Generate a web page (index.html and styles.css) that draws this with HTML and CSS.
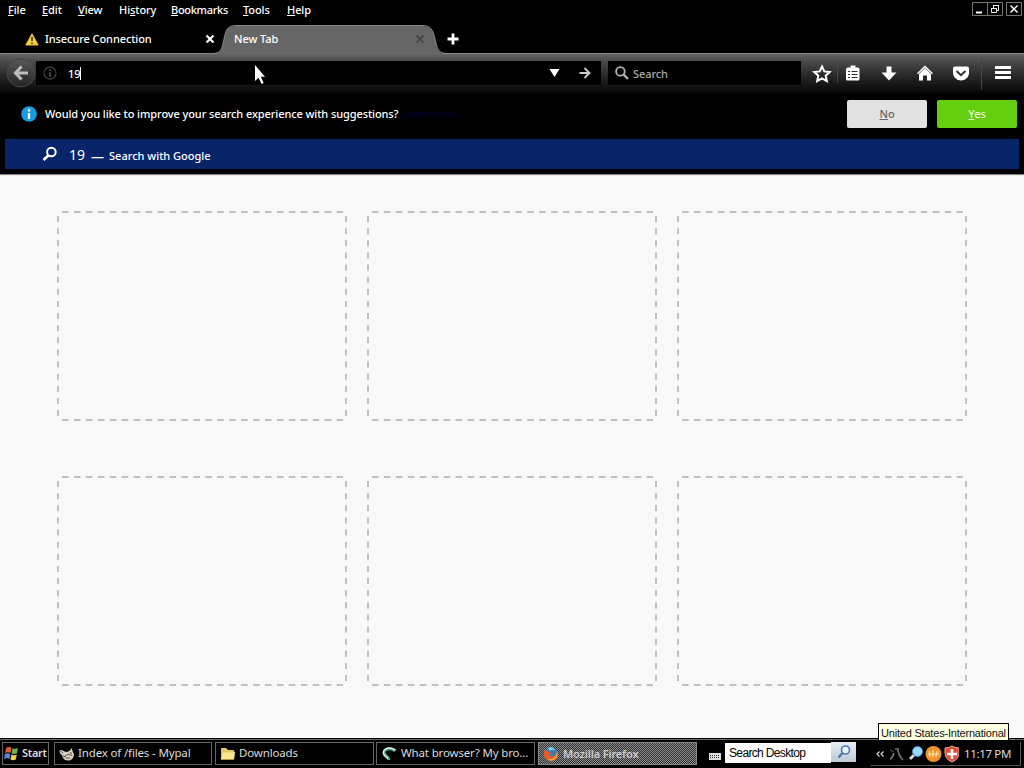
FILE: index.html
```html
<!DOCTYPE html>
<html lang="en">
<head>
<meta charset="utf-8">
<title>New Tab</title>
<link rel="stylesheet" href="styles.css">
</head>
<body>
<svg class="defs" width="0" height="0">
  <defs>
    <symbol id="slot" viewBox="0 0 290 210">
      <g fill="none" stroke="#c0c0c0" stroke-width="2">
        <path d="M5 1H286M5 209H286" stroke-dasharray="6.6 5.340"/>
        <path d="M1 5V206M289 5V206" stroke-dasharray="6 6.130"/>
      </g>
    </symbol>
  </defs>
</svg>
<div class="screen">
  <header class="menubar">
    <nav class="menus">
      <span class="m-file"><u>F</u>ile</span><span class="m-edit"><u>E</u>dit</span><span class="m-view"><u>V</u>iew</span><span class="m-history">Hi<u>s</u>tory</span><span class="m-bookmarks"><u>B</u>ookmarks</span><span class="m-tools"><u>T</u>ools</span><span class="m-help"><u>H</u>elp</span>
    </nav>
    <svg class="window-buttons" width="52" height="16" viewBox="0 0 52 16" fill="none" stroke="#77776c">
      <path d="M.5 2.500h15v13H.5zM15.500 2.500h15v13h-15zM34.500 2.500h15v13h-15z"/>
      <path d="M4 12.500h6" stroke="#fff" stroke-width="2"/>
      <path d="M19.500 8.500h5v4h-5zM21.500 8V5.500h5v5H25M19 8.500h6M21 5.500h6" stroke="#eee"/>
      <path d="M38.500 5.500l7 7M45.500 5.500l-7 7" stroke="#fff" stroke-width="1.500"/>
    </svg>
  </header>

  <div class="tabs">
    <div class="tab">
      <svg width="14" height="13" viewBox="0 0 14 13"><path d="M7 .8L13.200 12H.8z" fill="#f6cf43" stroke="#e3b62b" stroke-linejoin="round"/><path d="M7 4v4M7 9.500V11" stroke="#4a3c12" stroke-width="1.700"/></svg>
      <span class="tab-title">Insecure Connection</span>
      <svg class="tab-close" width="10" height="10" viewBox="0 0 10 10"><path d="M1.500 1.500l7 7M8.500 1.500l-7 7" stroke="#fff" stroke-width="2.200"/></svg>
    </div>
    <div class="tab active">
      <svg class="tab-shape" width="234" height="30" viewBox="0 0 234 30"><path d="M0 29C9 29 9 22 11 14C13 5 14 1 23 1H209C218 1 220 5 222 14C224 23 225 29 234 29V30H0z" fill="#666"/><path d="M0 28.500C9 28.500 9 22 11 14C13 5 14 .5 23 .5H209C218 .5 220 5 222 14C224 23 225 28.500 234 28.500" fill="none" stroke="#888"/></svg>
      <span class="tab-title">New Tab</span>
      <svg class="tab-close" width="10" height="10" viewBox="0 0 10 10"><path d="M1.500 1.500l7 7M8.500 1.500l-7 7" stroke="#484848" stroke-width="1.800"/></svg>
    </div>
    <svg class="new-tab" width="12" height="12" viewBox="0 0 12 12"><path d="M6 .5v11M.5 6h11" stroke="#fff" stroke-width="2.800"/></svg>
  </div>

  <div class="toolbar">
    <svg class="back" width="30" height="30" viewBox="0 0 30 30">
      <defs><linearGradient id="bg" x2="0" y2="1"><stop stop-color="#585858"/><stop offset="1" stop-color="#242424"/></linearGradient></defs>
      <circle cx="15" cy="15" r="14" fill="url(#bg)" stroke="#484848"/>
      <path d="M15.500 8.500L9.500 15l6 6.500M9.500 15H22" fill="none" stroke="#bdbdbd" stroke-width="3"/>
    </svg>
    <div class="url">
      <svg class="identity" width="14" height="14" viewBox="0 0 14 14"><circle cx="7" cy="7" r="6" fill="none" stroke="#3b3b3b" stroke-width="1.300"/><path d="M7 6v5M7 3v2" stroke="#444" stroke-width="1.800"/></svg>
      <span class="url-text">19</span><i class="caret"></i>
      <svg class="drop" width="11" height="8" viewBox="0 0 11 8"><path d="M.5 0h10L5.500 8z" fill="#fff"/></svg>
      <svg class="go" width="12" height="12" viewBox="0 0 12 12"><path d="M.5 6H10M5.500 1l5 5-5 5" fill="none" stroke="#ccc" stroke-width="1.800"/></svg>
    </div>
    <div class="searchbox">
      <svg width="14" height="14" viewBox="0 0 14 14" fill="none" stroke="#b5b5b5"><circle cx="5.400" cy="5.400" r="4.300" stroke-width="1.800"/><path d="M8.500 8.500l4.500 4.500" stroke-width="2.300"/></svg>
      <span>Search</span>
    </div>
    <svg class="tool-icons" width="217" height="40" viewBox="0 0 217 40">
      <path d="M36.500 11v18" stroke="#484848"/>
      <path d="M180.500 3v33" stroke="#454545"/>
      <path d="M21 12.500l2.300 4.900 5.400.6-4 3.700 1.100 5.300-4.800-2.700-4.800 2.700 1.100-5.300-4-3.700 5.400-.6z" fill="none" stroke="#fff" stroke-width="2"/>
      <path d="M47 13.500h2.500v-2h5v2H57q1.500 0 1.500 1.500v10q0 1.500-1.500 1.500H46.500q-1.500 0-1.500-1.500V15q0-1.500 2-1.500z" fill="#fff"/>
      <path d="M47 17.500h2M47 20.500h2M47 23.500h2M50.500 17.500h6M50.500 20.500h6M50.500 23.500h6" stroke="#303030" stroke-width="1.200"/>
      <path d="M85.500 12.500h5v6h5L88 26.500l-7.500-8h5z" fill="#fff"/>
      <path d="M118 20L124 14l6 6v6.500h-4v-5h-4v5h-4z" fill="#fff"/>
      <path d="M116.500 19.800l7.500-7.300 7.500 7.300" fill="none" stroke="#fff" stroke-width="1.400"/>
      <path d="M154 12.500h12q2 0 2 2V19c0 4-4 7.500-8 7.500s-8-3.500-8-7.500v-4.500q0-2 2-2z" fill="#fff"/>
      <path d="M155.500 17l4.500 4.200 4.500-4.200" fill="none" stroke="#303030" stroke-width="2"/>
      <path d="M194 13.500h16M194 18.500h16M194 23.500h16" stroke="#fff" stroke-width="3"/>
    </svg>
  </div>

  <section class="popup">
    <div class="notice">
      <svg width="16" height="16" viewBox="0 0 16 16"><circle cx="8" cy="8" r="7.800" fill="#189de0"/><path d="M8 7v6M8 3v2.400" stroke="#fff" stroke-width="2.200"/></svg>
      <span class="question">Would you like to improve your search experience with suggestions?</span>
      <span class="learn">Learn more…</span>
      <div class="choice no"><span><u>N</u>o</span></div>
      <div class="choice yes"><span><u>Y</u>es</span></div>
    </div>
    <div class="result">
      <svg width="16" height="16" viewBox="0 0 16 16" fill="none" stroke="#fff"><circle cx="9.400" cy="6" r="4.300" stroke-width="2"/><path d="M6.500 9.200L1.500 14" stroke-width="2.600"/></svg>
      <span class="query">19</span><span class="dash">—</span><span class="engine">Search with Google</span>
    </div>
  </section>

  <main class="grid">
    <svg><use href="#slot"/></svg><svg><use href="#slot"/></svg><svg><use href="#slot"/></svg>
    <svg><use href="#slot"/></svg><svg><use href="#slot"/></svg><svg><use href="#slot"/></svg>
  </main>

  <footer class="taskbar">
    <div class="start">
      <svg width="15" height="15" viewBox="0 0 15 15"><path d="M2 2q3-2 5.500-.2L6.600 7Q4 5.500 1 7z" fill="#e4583a"/><path d="M8.500 2.200Q11 3.500 14 2l-1 5.200q-3 1.500-5.400.2z" fill="#6db34d"/><path d="M.8 8q3-1.500 5.600 0l-1 5Q3 11.500 0 13z" fill="#5685dc"/><path d="M7.400 8.500Q10 10 12.800 8.400l-1 5.200q-3 1.400-5.300 0z" fill="#efd14c"/></svg>
      <span>Start</span>
    </div>
    <div class="task t1">
      <svg width="16" height="16" viewBox="0 0 16 16"><path d="M.5 4.500Q3 3 5.500 5.500L8 6l3-1.500L12.500 2l1 3L15 8q0 5-4.500 6.500Q6 15 4 12L3 9Q.5 8 .5 4.500z" fill="#d7d1bf"/><path d="M6.500 9.500q3-2.500 6.500 0M7 12h4M11 6.500l2 1M1.500 5l2.500 2M4 10l3 1" fill="none" stroke="#4c4940"/></svg>
      <span>Index of /files - Mypal</span>
    </div>
    <div class="task t2">
      <svg width="16" height="16" viewBox="0 0 16 16"><path d="M1 3q0-1 1-1h4l2 2h5q1 0 1 1v8H1z" fill="#e9cc62"/><path d="M1 13.500L2.500 6H15l-1.200 7.500z" fill="#fae98e" stroke="#d4b14b" stroke-width=".6"/></svg>
      <span>Downloads</span>
    </div>
    <div class="task t3">
      <svg width="16" height="16" viewBox="0 0 16 16" fill="none"><path d="M14 5Q11 2 6.500 3 2 4.500 3.500 8c1 2 4.500 2.500 4.500 6" stroke="#4ba591" stroke-width="3"/><path d="M14.500 4Q9 .8 4.500 3 1.500 5 2.800 8.500 4.500 11 7 12.500" stroke="#d9f0e9" stroke-width="1.500"/></svg>
      <span>What browser? My bro...</span>
    </div>
    <div class="task t4 pressed">
      <svg width="16" height="16" viewBox="0 0 16 16"><circle cx="8" cy="8" r="7" fill="#377fba"/><path d="M5 2q5-2 7 2Q8 3 7 5z" fill="#8bd2e4"/><path d="M2 3Q-1 9 3 13q5 4 10 0 3-4 1-8 0 4-3 5-4 1-6-2 3 1 4-1Q6 7 5 5 3 5 2 3z" fill="#e95a26"/><path d="M14 5q2 5-2 8-4 3-8 0 5 1 8-2 2-2 2-6z" fill="#f4ad37"/></svg>
      <span>Mozilla Firefox</span>
    </div>
    <svg class="keyboard" width="12" height="8" viewBox="0 0 12 8"><path d="M0 1h12v7H0z" fill="#ddd"/><path d="M1 3.500h10M1 5.500h10" stroke="#333" stroke-dasharray="1 1"/></svg>
    <div class="desktop-search"><span>Search Desktop</span></div>
    <div class="desktop-go"><svg width="14" height="14" viewBox="0 0 14 14" fill="none"><circle cx="8.500" cy="5" r="4" fill="#e8f6ff" stroke="#4678b2" stroke-width="1.600"/><path d="M5.500 8L1.500 12.500" stroke="#4678b2" stroke-width="2.300"/></svg></div>
    <div class="tray">
      <svg width="85" height="18" viewBox="0 0 85 18">
        <path d="M5.500 6.500L3 9l2.500 2.500M9.500 6.500L7 9l2.500 2.500" fill="none" stroke="#ddd" stroke-width="1.200"/>
        <path d="M16 14q2 0 4-6M21 4h3q0 6 5 11" fill="none" stroke="#77766a" stroke-width="1.700"/>
        <path d="M16 5l4 2" stroke="#5e5132"/>
        <path d="M41 9l-5 5" stroke="#d5dde4" stroke-width="2.800"/><circle cx="43.500" cy="6.500" r="5" fill="#9ed8ff" stroke="#438dc8"/>
        <circle cx="59.500" cy="9" r="8" fill="#ee922c"/><path d="M55 6l1 6M59 5v7M63 6l-1 6M54 9h11" stroke="#ffe6b2" stroke-width="1.200"/>
        <path d="M71 3q4 0 7-2 3 2 7 2v5q0 6-7 9-7-3-7-9z" fill="#d95136" stroke="#f2aa98"/><path d="M78 4v10M73 9h10" stroke="#fff" stroke-width="2.500"/>
      </svg>
      <span class="clock">11:17 PM</span>
    </div>
  </footer>
  <div class="tooltip"><span>United States-International</span></div>
  <svg class="pointer" width="12" height="20" viewBox="0 0 12 20"><path d="M1 0v16l3.500-3.300L7.500 19l2.200-1-2.900-6.200H11z" fill="#fff"/></svg>
</div>
</body>
</html>
```

FILE: styles.css
```css
* { box-sizing: border-box; }
body { margin: 0; }
.defs { position: absolute; }
svg { flex: none; display: block; }
.screen {
  position: relative;
  display: flex;
  flex-direction: column;
  width: 1024px;
  height: 768px;
  overflow: hidden;
  background: #000;
  color: #fff;
  font: 500 11px/16px "Noto Sans", "Open Sans", sans-serif;
  letter-spacing: -.09px;
  white-space: nowrap;
}
u { text-underline-offset: 1px; text-decoration-thickness: 1px; }

.menubar { display: flex; justify-content: space-between; height: 25px; padding-left: 8px; }
.menus { display: flex; padding-top: 2px; }
.m-file { width: 34px; }
.m-edit { width: 36px; }
.m-view { width: 41px; }
.m-history { width: 52px; }
.m-bookmarks { width: 72px; letter-spacing: -.3px; }
.m-tools { width: 44px; }

.tabs { display: flex; height: 28px; }
.tab { display: flex; align-items: center; width: 223px; padding-left: 25px; }
.tab .tab-title { margin-left: 6px; }
.tab-close { margin-left: auto; margin-right: 8px; }
.tab.active { position: relative; width: 214px; padding-left: 11px; }
.tab.active .tab-title { position: relative; margin-left: 0; }
.tab.active .tab-close { position: relative; margin-right: 12px; }
.tab-shape { position: absolute; left: -10px; top: 0; z-index: 0; }
.new-tab { margin: 8px 0 0 10px; }

.toolbar {
  display: flex;
  height: 42px;
  padding: 0 0 0 6px;
  border-top: 1px solid #858585;
  background: linear-gradient(#646464 0, #484848 8px, #2c2c2c 20px, #0c0c0c 36px, #000);
}
.back { margin: 4px 0 0; }
.url {
  display: flex;
  align-items: center;
  width: 565px;
  height: 24px;
  margin-top: 7px;
  padding-left: 7px;
  background: #000;
}
.url-text { margin-left: 11px; padding-top: 2px; }
.caret { width: 1px; height: 13px; background: #fff; }
.drop { margin-left: auto; }
.go { margin: 0 10px 0 19px; }
.searchbox {
  display: flex;
  align-items: center;
  gap: 4px;
  width: 193px;
  height: 24px;
  margin: 7px 0 0 7px;
  padding-left: 7px;
  background: #000;
  color: #aaa;
}
.searchbox span { padding-top: 2px; }

.popup { height: 79px; padding: 0 5px; }
.notice { display: flex; align-items: center; height: 38px; padding: 0 2px 0 16px; }
.question { width: 355px; margin-left: 8px; }
.learn { width: 56px; margin-left: 2px; color: #00003d; font-size: 9.5px; }
.choice { display: flex; align-items: center; justify-content: center; width: 80px; height: 28px; border-radius: 2px; }
.no { margin-left: auto; background: #e2e2e2; color: #666; }
.yes { margin-left: 10px; background: #62ce0d; color: #eaffdb; }
.result { display: flex; align-items: center; height: 30px; margin-top: 6px; padding-left: 37px; background: #0a246a; letter-spacing: 0; }
.query { margin-left: 11px; padding-top: 2px; font-size: 14px; font-weight: 400; }
.dash { margin-left: 6px; padding-top: 3px; font-size: 13px; }
.engine { margin-left: 5px; padding-top: 3px; }

.grid {
  display: grid;
  grid-template-columns: repeat(3, 290px);
  grid-template-rows: 210px 210px;
  gap: 55px 20px;
  height: 564px;
  padding: 37px 57px 0;
  background: #f8f8f8;
  box-shadow: inset 0 2px 1px -1px #777;
}
.grid svg { width: 290px; height: 210px; }

.taskbar {
  display: flex;
  height: 30px;
  padding: 3px 0 3px 2px;
  border-top: 1px solid #000;
  box-shadow: inset 0 1px #6d6d6d;
  background: #000;
  color: #ddd;
  font: 11.5px/16px "Noto Sans", sans-serif;
}
.start, .task { display: flex; align-items: center; height: 23px; border: 1px solid #666; }
.start span, .task span { padding-bottom: 2px; }
.start { width: 47px; padding-left: 1px; gap: 3px; font-weight: 600; font-size: 11px; letter-spacing: -.3px; }
.task { width: 159px; margin-left: 3px; padding-left: 4px; gap: 3px; letter-spacing: -.15px; }
.t1 { margin-left: 5px; width: 158px; }
.t3 { gap: 4px; margin-left: 2px; }
.pressed {
  gap: 4px;
  border-color: #888;
  background: repeating-conic-gradient(#343434 0 25%, #888 0 50%) 0 0 / 2px 2px;
  color: #ccc;
  font-size: 11px;
  font-weight: 600;
}
.pressed span { padding: 1px 0 0; }
.keyboard { margin: 10px 0 0 12px; }
.desktop-search { display: flex; align-items: center; width: 106px; height: 20px; margin: 1px 0 0 4px; padding-left: 4px; background: #fff; color: #000; font: 12px/16px "Liberation Sans", Arial, sans-serif; letter-spacing: -.65px; }
.desktop-search span { letter-spacing: -.65px; }
.desktop-go { display: flex; align-items: center; justify-content: center; width: 25px; height: 20px; background: linear-gradient(#e7edf2, #bdc9d3); }
.tray { display: flex; align-items: center; width: 150px; height: 24px; margin: 0 0 0 15px; padding-left: 3px; border: solid #555; border-width: 0 1px 1px 0; }
.clock { margin-left: 5px; letter-spacing: -.35px; }
.tooltip {
  position: absolute;
  left: 878px;
  top: 723px;
  width: 131px;
  height: 18px;
  padding-left: 2px;
  border: 1px solid #000;
  background: #ffffe1;
  color: #111;
  font: 11px/18px "Liberation Sans", Arial, sans-serif;
  letter-spacing: -.2px;
}
.pointer { position: absolute; left: 254px; top: 65px; }
```
